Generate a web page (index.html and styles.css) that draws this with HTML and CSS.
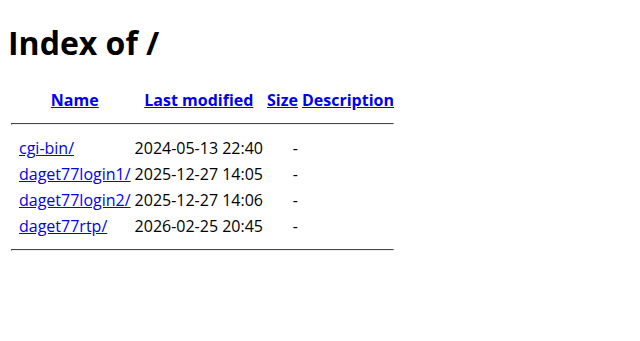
FILE: index.html
```html
<!DOCTYPE html>
<html>
<head>
<meta charset="utf-8">
<title>Index of /</title>
<link rel="stylesheet" href="styles.css">
</head>
<body class="page">
<h1 class="title">Index of /</h1>
<table class="listing">
<tr><th class="ico"><span class="icon"></span></th><th><a href="#">Name</a></th><th><a href="#">Last modified</a></th><th><a href="#">Size</a></th><th><a href="#">Description</a></th></tr>
<tr><th colspan="5" class="sep"><hr class="rule"></th></tr>
<tr><td class="ico"><span class="icon"></span></td><td><a href="#">cgi-bin/</a></td><td class="right">2024-05-13 22:40  </td><td class="right">  - </td><td>&nbsp;</td></tr>
<tr><td class="ico"><span class="icon"></span></td><td><a href="#">daget77login1/</a></td><td class="right">2025-12-27 14:05  </td><td class="right">  - </td><td>&nbsp;</td></tr>
<tr><td class="ico"><span class="icon"></span></td><td><a href="#">daget77login2/</a></td><td class="right">2025-12-27 14:06  </td><td class="right">  - </td><td>&nbsp;</td></tr>
<tr><td class="ico"><span class="icon"></span></td><td><a href="#">daget77rtp/</a></td><td class="right">2026-02-25 20:45  </td><td class="right">  - </td><td>&nbsp;</td></tr>
<tr><th colspan="5" class="sep"><hr class="rule"></th></tr>
</table>
</body>
</html>
```
FILE: styles.css
```css
.page {
  margin: 0 8px 8px;
  font-family: "Open Sans", "Noto Sans", sans-serif;
  font-size: 16px;
  color: #000;
  background: #fff;
}
.title {
  font-size: 32px;
  font-weight: bold;
  margin: 21.44px 0;
}
.listing {
  border-spacing: 2px;
}
.listing th, .listing td {
  padding: 1px;
}
.listing a {
  color: #0000ee;
  text-decoration: underline;
}
.icon {
  display: inline-block;
  width: 4px;
  height: 1px;
}
.ico {
  vertical-align: top;
}
.right {
  text-align: right;
}
.rule {
  margin: 8px 0;
  border: 1px inset #eee;
  border-color: #9a9a9a #eee #eee #9a9a9a;
}
```
